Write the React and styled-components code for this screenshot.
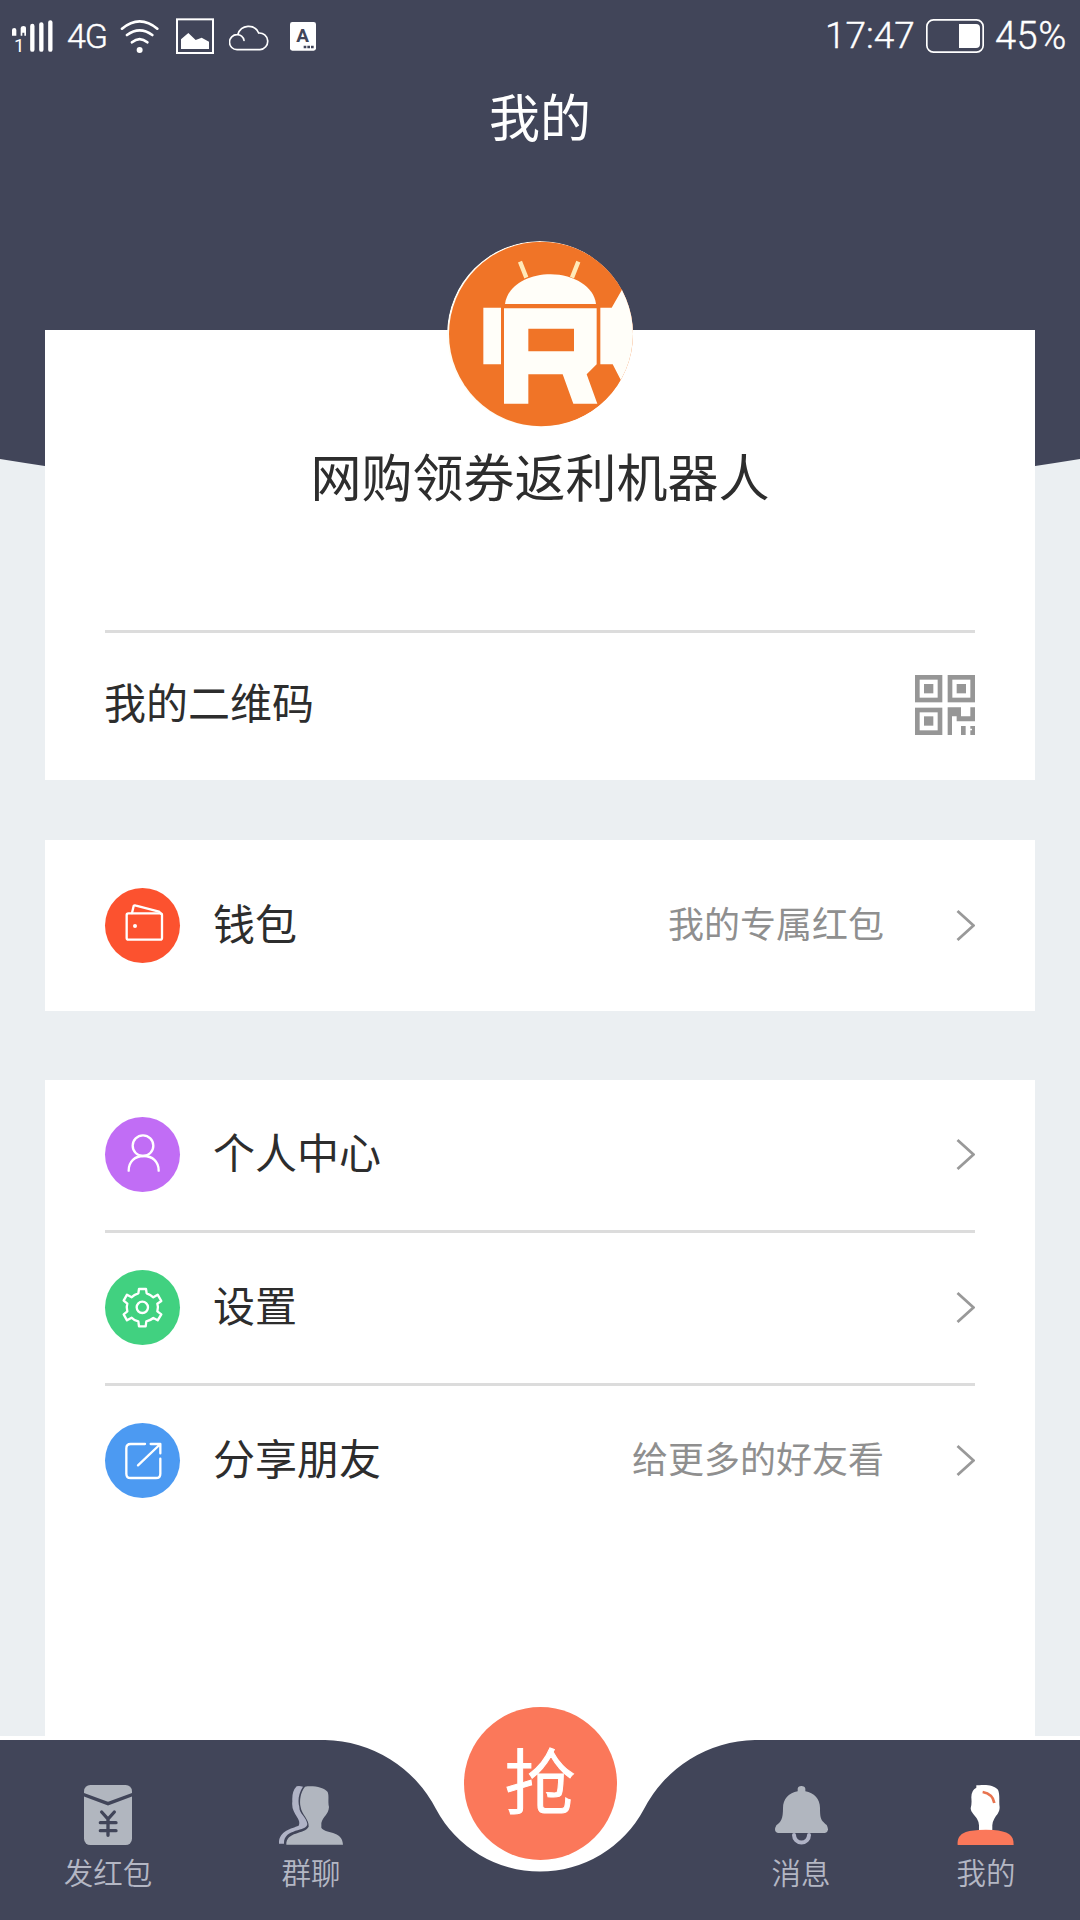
import styled, { createGlobalStyle } from 'styled-components';

// --- STYLED COMPONENTS ---

const GlobalStyle = createGlobalStyle`
  * {
    box-sizing: border-box;
  }

  body {
    margin: 0;
    background-color: #ebeff2;
    font-family: 'Noto Sans CJK SC', sans-serif;
    color: #2d2d2d;
  }
`;

const Screen = styled.div`
  display: flex;
  flex-direction: column;
  width: 1080px;
  height: 1920px;
  overflow: hidden;
  background-color: #ebeff2;
`;

/* The header reaches below the first card and ends in a shallow arc */
const Header = styled.header`
  flex-shrink: 0;
  height: 510px;
  margin-bottom: -180px;
  background-color: #414559;
  color: #ffffff;
  clip-path: circle(3375px at 540px -2872.5px);
`;

const StatusBar = styled.div`
  display: flex;
  align-items: center;
  justify-content: space-between;
  height: 72px;
  padding: 0 13px 0 10px;
`;

const StatusGroup = styled.div`
  display: flex;
  align-items: center;
`;

const StatusIcon = styled.svg`
  display: block;
  height: 72px;
  width: ${(props) => props.$width}px;
  margin-left: ${(props) => props.$gap || 0}px;
`;

const StatusText = styled.span`
  width: ${(props) => props.$width}px;
  margin-left: ${(props) => props.$gap || 0}px;
  font-family: Roboto, sans-serif;
  font-weight: 300;
  font-size: ${(props) => props.$size || 37}px;
  line-height: 72px;
  letter-spacing: ${(props) => props.$spacing || 0}px;
  white-space: nowrap;
  -webkit-text-stroke: 0.4px #ffffff;
`;

const Title = styled.h1`
  margin: 0;
  padding-top: 5px;
  font-size: 51px;
  font-weight: 400;
  line-height: 76px;
  text-align: center;
`;

const Card = styled.section`
  position: relative;
  flex-shrink: 0;
  height: ${(props) => props.$height}px;
  margin: ${(props) => props.$top || 0}px 45px 0;
  padding: 0 60px;
  background-color: #ffffff;
`;

const Profile = styled.div`
  display: flex;
  flex-direction: column;
  align-items: center;
  height: 303px;
  border-bottom: 3px solid #dcdcdc;
`;

const Avatar = styled.svg`
  width: 186px;
  height: 186px;
  margin-top: -89px;
  flex-shrink: 0;
  border-radius: 50%;
`;

const UserName = styled.h2`
  margin: 10px 0 0;
  font-size: 51px;
  font-weight: 400;
  line-height: 76px;
`;

const CodeRow = styled.div`
  display: flex;
  align-items: center;
  justify-content: space-between;
  height: 144px;
`;

const CodeLabel = styled.span`
  padding-bottom: 8px;
  margin-left: -1px;
  font-size: 42px;
  line-height: 60px;
`;

const QrIcon = styled.svg`
  width: 60px;
  height: 60px;
`;

const Row = styled.div`
  display: flex;
  align-items: center;
  height: ${(props) => props.$height || 153}px;
  padding-bottom: ${(props) => (props.$height ? 0 : 1)}px;
  border-bottom: ${(props) => (props.$height ? 0 : 3)}px solid ${(props) => (props.$divided ? '#dcdcdc' : 'transparent')};
`;

const RowIcon = styled.svg`
  width: 75px;
  height: 75px;
  border-radius: 50%;
  background-color: ${(props) => props.$color};
  fill: none;
  stroke: #ffffff;
  stroke-width: 7;
  stroke-linejoin: round;
  stroke-linecap: round;
`;

const RowLabel = styled.span`
  padding-bottom: 7px;
  margin-left: 33px;
  font-size: 42px;
  line-height: 60px;
`;

const RowHint = styled.span`
  padding-bottom: 8px;
  margin-left: auto;
  font-size: 36px;
  line-height: 54px;
  color: #8f8f8f;
`;

const Arrow = styled.svg`
  width: 20px;
  height: 33px;
  margin-left: 71px;
  fill: none;
  stroke: #999999;
  stroke-width: 2.8;
`;

const TabBar = styled.nav`
  position: relative;
  display: flex;
  flex-shrink: 0;
  height: 184px;
  margin-top: -4px;
  padding-top: 49px;
`;

const TabShape = styled.svg`
  position: absolute;
  left: 0;
  top: 0;
`;

const Tab = styled.div`
  position: relative;
  display: flex;
  flex-direction: column;
  align-items: center;
  width: ${(props) => props.$width}px;
  font-size: 29.5px;
  font-weight: 350;
  line-height: 44px;
  color: #b4b7c4;
`;

const TabIcon = styled.svg`
  width: ${(props) => props.$width}px;
  height: 60px;
  margin-bottom: 4px;
`;

const GrabSlot = styled.div`
  position: relative;
  display: flex;
  justify-content: center;
  width: 304px;
  padding-right: 36px;
`;

const GrabButton = styled.button`
  width: 153px;
  height: 153px;
  margin-top: -78px;
  padding: 0 0 12px;
  border: none;
  border-radius: 50%;
  background-color: #fb785a;
  color: #ffffff;
  font-family: 'Noto Sans CJK SC', sans-serif;
  font-size: 71px;
  font-weight: 350;
  line-height: 141px;
  -webkit-text-stroke: 1px #ffffff;
`;

// --- ICONS ---

const SignalIcon = () => (
  <StatusIcon viewBox="30 0 132 216" $width={44} fill="none" stroke="#fff" strokeWidth="13" strokeLinecap="round">
    <path d="M97 78V149M124 73V149M151 67V149" />
    <g fill="#fff" stroke="none">
      <path d="M36 90Q36 84 43 84Q49 84 49 90V107H36Z" />
      <path d="M62 84Q63 78 70 78Q78 78 78 85V107H73V98H67V107H62Z" />
      <text x="42" y="156" fontFamily="Roboto" fontSize="56">1</text>
    </g>
  </StatusIcon>
);

const WifiIcon = () => (
  <StatusIcon viewBox="358 0 118 216" $width={39.3} $gap={10} fill="none" stroke="#fff" strokeWidth="8" strokeLinecap="round">
    <path d="M364 86Q417 42 470 86M379 105Q417 77 455 105M394 127Q417 108 440 127" />
    <circle cx="417" cy="150" r="9" fill="#fff" stroke="none" />
  </StatusIcon>
);

const PhotoIcon = () => (
  <StatusIcon viewBox="528 0 114 216" $width={38} $gap={17}>
    <rect x="531" y="58" width="108" height="101" fill="none" stroke="#fff" strokeWidth="6" />
    <path d="M543 147V118L565 99L587 120L605 113L627 125V147Z" fill="#fff" />
  </StatusIcon>
);

const CloudIcon = () => (
  <StatusIcon viewBox="687 0 120 216" $width={40} $gap={15} fill="none" stroke="#fff" strokeWidth="5" strokeLinecap="round">
    <path d="M732 121A20 20 0 0 0 711 104A22.5 22.5 0 0 0 711 149H780A24 24 0 0 0 776 99A33 33 0 0 0 714 103" />
  </StatusIcon>
);

const InputIcon = () => (
  <StatusIcon viewBox="870 0 78 216" $width={26} $gap={21}>
    <rect x="870" y="66" width="78" height="86" rx="7" fill="#fff" />
    <text x="908" y="126" textAnchor="middle" fontFamily="Roboto" fontWeight="700" fontSize="57" fill="#414559">A</text>
    <path d="M911 137h8v8h-8zM922 137h8v8h-8zM933 137h8v8h-8z" fill="#414559" />
  </StatusIcon>
);

const BatteryIcon = () => (
  <StatusIcon viewBox="438 0 174 216" $width={58} $gap={0}>
    <rect x="440.5" y="59.5" width="169" height="97" rx="20" fill="none" stroke="#fff" strokeWidth="5" />
    <path d="M537 72H588Q600 72 600 84V132Q600 144 588 144H537Z" fill="#fff" />
  </StatusIcon>
);

const RobotAvatar = () => (
  <Avatar viewBox="81 62 558 558">
    <circle cx="360" cy="341" r="279" fill="#fffdf5" />
    <circle cx="364" cy="341" r="277" fill="#f07427" />
    <g fill="#fffef9">
      <path d="M640 150L605 210L575 262H541V432H578L602 478L640 490Z" />
      <path d="M190 262H243V432H190Z" />
      <path d="M255 251C262 198 320 162 392 162C462 162 522 200 528 251Z" />
      <path
        fillRule="evenodd"
        d="M252 264H530V432L500 462L532 550H460L428 462H325V550H252ZM325 325V393H462V325Z"
      />
    </g>
    <path d="M300 124L319 172M475 124L456 172" stroke="#ffe9b8" strokeWidth="13" />
  </Avatar>
);

const QrCode = () => (
  <QrIcon viewBox="105 75 180 180">
    <g fill="none" stroke="#969696" strokeWidth="14">
      <rect x="112" y="82" width="68" height="68" />
      <rect x="210" y="82" width="68" height="68" />
      <rect x="112" y="180" width="68" height="68" />
    </g>
    <g fill="#969696">
      <rect x="132" y="102" width="28" height="28" />
      <rect x="230" y="102" width="28" height="28" />
      <rect x="132" y="199" width="28" height="28" />
      <path d="M203 172H243V199H271V172H285V214H230V199H216V255H203Z" />
      <path d="M243 228H257V255H243ZM271 228H285V255H271V241H276V236H271Z" />
    </g>
  </QrIcon>
);

const Chevron = () => (
  <Arrow viewBox="0 0 20 33">
    <path d="M2.5 2L18.5 16.5L2.5 31" />
  </Arrow>
);

const WalletIcon = () => (
  <RowIcon viewBox="45 84 225 225" $color="#fc522f">
    <rect x="110" y="160" width="106" height="79" rx="5" />
    <path d="M126 159L131 138Q133 135 138 137L207 155L214 162" />
    <circle cx="135" cy="198" r="6" fill="#fff" stroke="none" />
  </RowIcon>
);

const PersonIcon = () => (
  <RowIcon viewBox="45 51 225 225" $color="#c16df5">
    <circle cx="159" cy="137" r="31" />
    <path d="M116 212C116 184 135 168 161 168C187 168 206 184 206 212" />
  </RowIcon>
);

const GearIcon = () => (
  <RowIcon viewBox="45 510 225 225" $color="#41d180">
    <circle cx="157" cy="622" r="17" />
    <path d="M147 567H168L170 580Q181 584 190 592L203 584L214 603L202 611Q206 622 202 634L214 643L203 661L190 654Q182 661 169 664L167 679H147L145 664Q132 661 125 653L111 661L101 643L112 634Q108 622 112 611L101 602L111 584L125 592Q132 584 145 580Z" />
  </RowIcon>
);

const ShareIcon = () => (
  <RowIcon viewBox="45 969 225 225" $color="#4c9af2">
    <path d="M165 1032H122Q109 1032 109 1045V1121Q109 1134 122 1134H198Q211 1134 211 1121V1076" />
    <path d="M144 1096L208 1035M182 1032H211V1060" />
  </RowIcon>
);

const EnvelopeIcon = () => (
  <TabIcon viewBox="252 285 144 180" $width={48}>
    <rect x="252" y="285" width="144" height="180" rx="19" fill="#b1b6bf" />
    <g fill="none" stroke="#414559" strokeWidth="10" strokeLinecap="round">
      <path d="M248 313L324 341L400 313" />
      <path d="M305 366L324 387L343 366M324 387V436M301 398H348M301 422H348" />
    </g>
  </TabIcon>
);

const GroupIcon = () => (
  <TabIcon viewBox="840 287 192 178" $width={64}>
    <path fill="#b0b3c6" d="M893 290Q900 287 912 291C898 312 896 334 901 352C900 372 923 382 925 403C924 427 853 415 855 462H840C838 425 876 417 899 408C906 393 892 382 884 364Q878 352 880 335Q878 305 893 290Z" />
    <path fill="#b1b6bf" d="M918 291C940 287 976 292 986 307C991 320 986 335 990 352C988 376 972 380 967 400V414C976 432 1031 421 1032 465H862C861 424 917 435 929 411C931 390 907 373 905 352C901 334 904 308 918 291Z" />
  </TabIcon>
);

const BellIcon = () => (
  <TabIcon viewBox="222 285 164 180" $width={54.7}>
    <path fill="#b1b6bf" d="M293 304V296Q294 288 304 288Q315 288 316 296V304C342 308 360 327 360 354C360 391 365 391 380 405Q390 425 375 429H234Q219 425 229 406C243 395 249 388 249 354C249 327 267 308 293 304Z" />
    <path d="M282 435A22.5 22.5 0 0 0 327 435" fill="none" stroke="#b0b3c6" strokeWidth="12" strokeLinecap="round" />
  </TabIcon>
);

const MeIcon = () => (
  <TabIcon viewBox="776 285 172 180" $width={57.3}>
    <path fill="#fff" d="M834 286C855 284 884 283 899 299C906 316 901 332 904 352C904 368 895 374 888 386Q882 396 882 406V430H842V406Q842 396 836 386C828 374 818 368 817 355Q821 343 819 322Q819 300 834 293Z" />
    <path d="M853 306Q884 312 888 339" fill="none" stroke="#e8744f" strokeWidth="8" />
    <path fill="#fb785a" d="M778 465C776 430 801 423 841 420Q862 418 885 420C928 424 947 433 946 465Z" />
  </TabIcon>
);

// --- PAGE ---

export default function App() {
  return (
    <Screen>
      <GlobalStyle />
      <Header>
        <StatusBar>
          <StatusGroup>
            <SignalIcon />
            <StatusText $size={34} $gap={13} $width={43} $spacing={-1}>4G</StatusText>
            <WifiIcon />
            <PhotoIcon />
            <CloudIcon />
            <InputIcon />
          </StatusGroup>
          <StatusGroup>
            <StatusText $width={101}>17:47</StatusText>
            <BatteryIcon />
            <StatusText $gap={11} $width={72} $size={38} $spacing={0.5}>45%</StatusText>
          </StatusGroup>
        </StatusBar>
        <Title>我的</Title>
      </Header>

      <Card $height={450}>
        <Profile>
          <RobotAvatar />
          <UserName>网购领券返利机器人</UserName>
        </Profile>
        <CodeRow>
          <CodeLabel>我的二维码</CodeLabel>
          <QrCode />
        </CodeRow>
      </Card>

      <Card $height={171} $top={60}>
        <Row $height={171}>
          <WalletIcon />
          <RowLabel>钱包</RowLabel>
          <RowHint>我的专属红包</RowHint>
          <Chevron />
        </Row>
      </Card>

      <Card $height={660} $top={69}>
        <Row $divided>
          <PersonIcon />
          <RowLabel>个人中心</RowLabel>
          <RowHint />
          <Chevron />
        </Row>
        <Row $divided>
          <GearIcon />
          <RowLabel>设置</RowLabel>
          <RowHint />
          <Chevron />
        </Row>
        <Row>
          <ShareIcon />
          <RowLabel>分享朋友</RowLabel>
          <RowHint>给更多的好友看</RowHint>
          <Chevron />
        </Row>
      </Card>

      <TabBar>
        <TabShape width="1080" height="184" viewBox="0 1736 1080 184">
          <rect y="1736" width="1080" height="184" fill="#fff" />
          <path
            d="M0 1740H325A127 127 0 0 1 436 1809A117.7 117.7 0 0 0 644 1809A127 127 0 0 1 755 1740H1080V1920H0Z"
            fill="#414559"
          />
        </TabShape>
        <Tab $width={216}>
          <EnvelopeIcon />
          发红包
        </Tab>
        <Tab $width={190}>
          <GroupIcon />
          群聊
        </Tab>
        <GrabSlot>
          <GrabButton>抢</GrabButton>
        </GrabSlot>
        <Tab $width={182}>
          <BellIcon />
          消息
        </Tab>
        <Tab $width={188}>
          <MeIcon />
          我的
        </Tab>
      </TabBar>
    </Screen>
  );
}
